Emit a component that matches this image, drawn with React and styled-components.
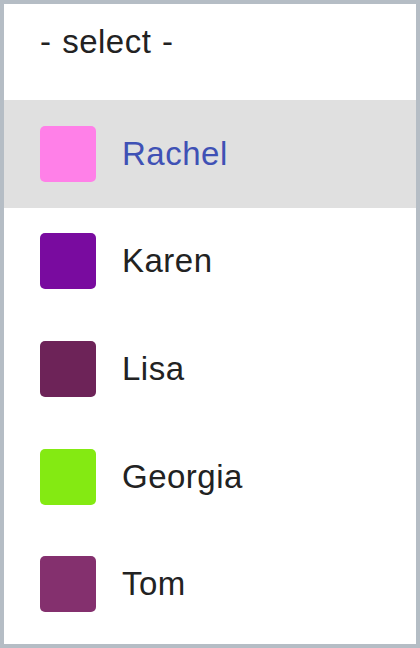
import React, { useState } from 'react';
import styled, { createGlobalStyle } from "styled-components"

const GlobalStyle = createGlobalStyle`
    html, body {
        margin: 0;
        padding: 0;
        background: #fff;
    }
`

const Menu = styled.div`
    box-sizing: border-box;
    width: 420px;
    height: 648px;
    border: 4px solid #b5bdc5;
    background: #fff;
    font-family: "Liberation Sans", Arial, sans-serif;
    font-size: 33px;
    letter-spacing: 0.5px;
    color: #222;
    overflow: hidden;
`
const Placeholder = styled.div`
    box-sizing: border-box;
    height: 96px;
    padding: 19px 36px 0;
    line-height: 1.15;
    word-spacing: 1px;
`
const List = styled.ul`
    list-style: none;
    margin: 0;
    padding: 0;
`
const Option = styled.li`
    display: flex;
    align-items: center;
    gap: 26px;
    height: 107.6px;
    padding: 0 36px;
    background: ${p => p.$active ? '#e0e0e0' : 'transparent'};
    color: ${p => p.$active ? '#3f51b5' : '#222'};
    cursor: pointer;
`
const Swatch = styled.span`
    flex: none;
    width: 56px;
    height: 56px;
    border-radius: 5px;
    background: ${p => p.$color};
`

const people = [
    { name: 'Rachel', color: '#ff80e8' },
    { name: 'Karen', color: '#790b9f' },
    { name: 'Lisa', color: '#6d2358' },
    { name: 'Georgia', color: '#84ea12' },
    { name: 'Tom', color: '#84306e' },
]

function App() {
    const [active, setActive] = useState('Rachel')

    return (
        <>
            <GlobalStyle />
            <Menu>
                <Placeholder>- select -</Placeholder>
                <List>
                    {people.map(p => (
                        <Option key={p.name} $active={p.name === active} onMouseEnter={() => setActive(p.name)}>
                            <Swatch $color={p.color} />
                            {p.name}
                        </Option>
                    ))}
                </List>
            </Menu>
        </>
    )
}

export default App
